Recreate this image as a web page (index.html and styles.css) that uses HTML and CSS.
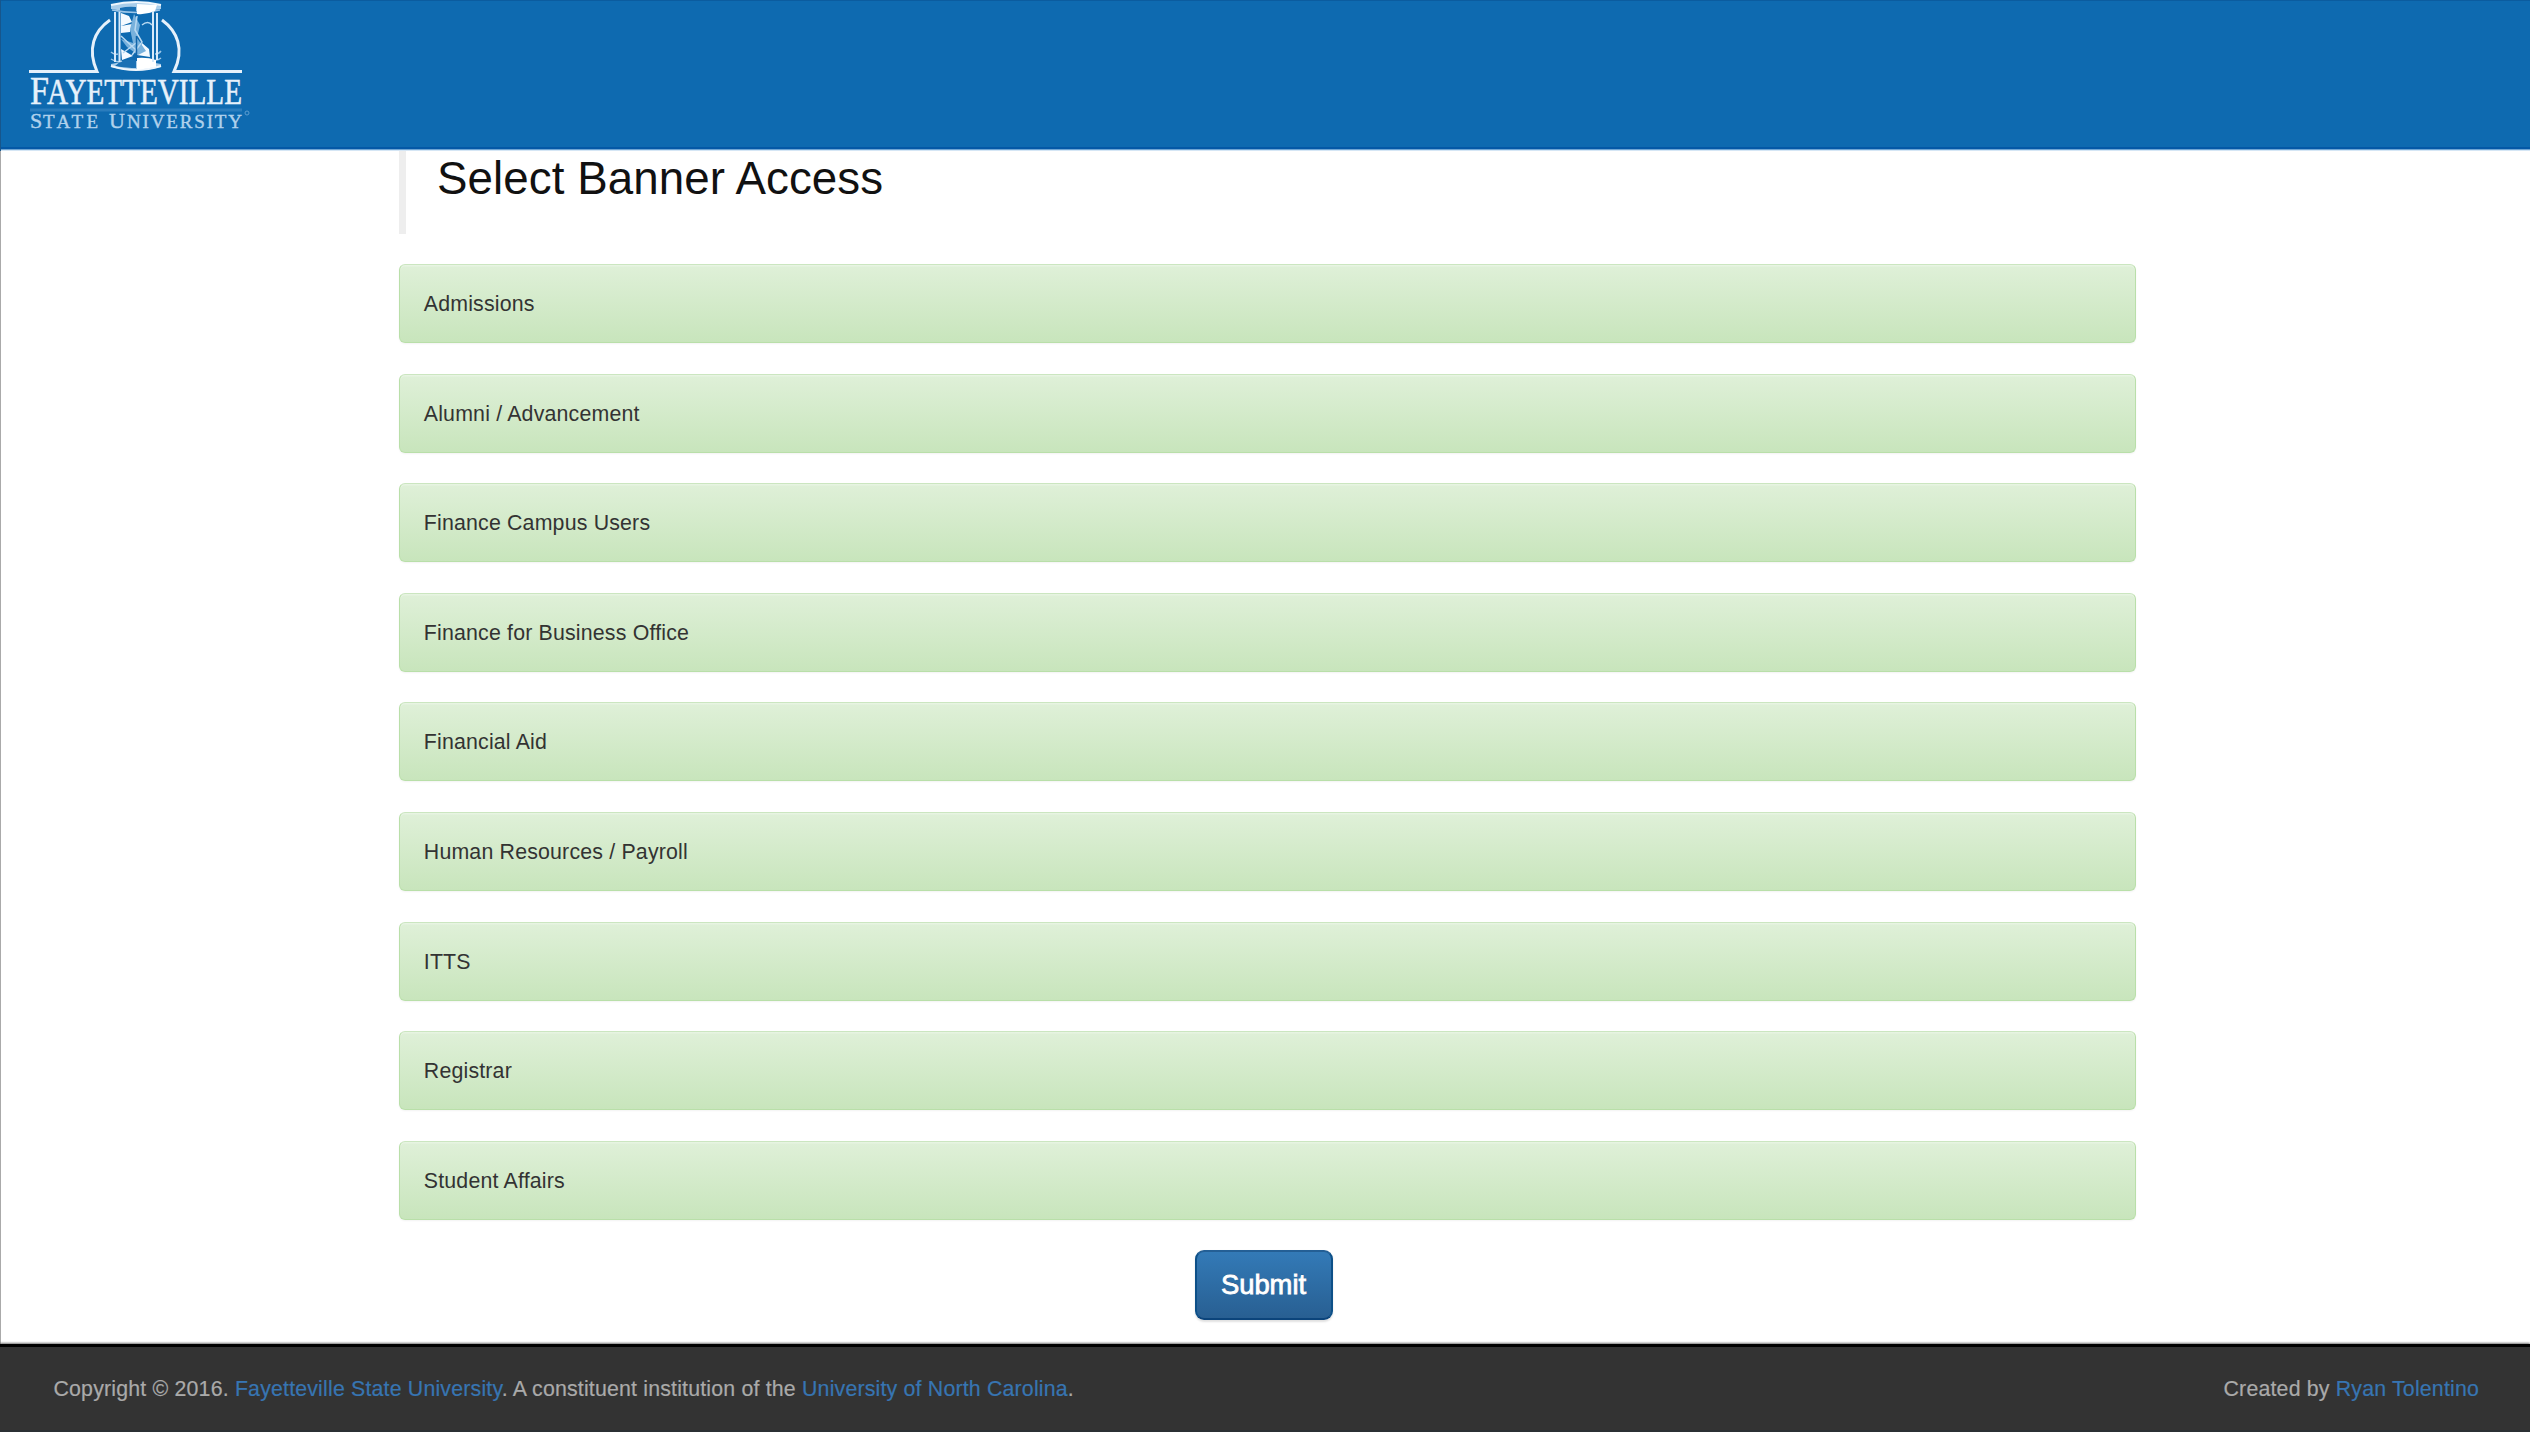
FILE: index.html
```html
<!DOCTYPE html>
<html lang="en">
<head>
<meta charset="utf-8">
<title>Select Banner Access</title>
<link rel="stylesheet" href="styles.css">
</head>
<body>
<header class="site-header">
  <svg class="logo" viewBox="0 0 280 148" role="img" aria-label="Fayetteville State University">
    <g fill="none" stroke="#e6f1fb" stroke-width="3">
      <path d="M29 71.5H97C87 49 94 31 110 20"/>
      <path d="M242 71.5H174C185 49 177 31 162 20"/>
    </g>
    <path d="M111 5Q136-1 161 5V9Q136 14 111 9ZM111 64Q136 58 161 64V67Q136 74 111 67Z" fill="#a9cdea"/>
    <path d="M120 8Q128 6 136 7V13Q128 13 120 11ZM121 61Q128 59 136 60V68Q128 68 115 66Z" fill="#1a70b4"/>
    <g fill="none" stroke="#eef6fd" stroke-width="2">
      <path d="M111 5Q136-1 161 5M111 66Q136 74 161 66"/>
      <path d="M112 10Q136 15 160 10M111 59Q117 63 122 61M150 61Q157 61 161 58M111 52Q114 55 118 54M155 54Q159 54 161 51" stroke="#9cc6e8" stroke-width="1.5"/>
    </g>
    <path d="M137 4L157 5L155 11Q146 15 137 14ZM137 58Q147 57 156 60V67L137 70Z" fill="#fff"/>
    <path d="M115 12V62M119.500 12V62M153 11V62M157 13V60" stroke="#d8eafa" stroke-width="2"/>
    <path d="M121 13L129 16L132 22L121 26ZM121 26L132 24L130 32L121 33ZM142 43L149 49L150 57L137 55ZM121 49L128 53L133 56L122 60Z" fill="#f4faff"/>
    <path d="M134 14L140 25L137 38L146 51L138 55L127 47L121 39L133 43L130 29Z" fill="#78b1dc"/>
    <path d="M137 16L135 30L142 42L132 55M121 36L136 50M142 25Q148 20 152 25M123 53L136 43" fill="none" stroke="#b9d9f1" stroke-width="1.500"/>
    <path d="M136.500 36V58" stroke="#1164a9" stroke-width="1.500"/>
    <g class="logo-text">
      <text class="name" x="30" y="104" font-size="39" textLength="19" lengthAdjust="spacingAndGlyphs">F</text>
      <text class="name" x="47" y="104" font-size="35" textLength="195" lengthAdjust="spacingAndGlyphs">AYETTEVILLE</text>
      <text class="sub" x="30" y="128" font-size="22">S</text>
      <text class="sub" x="43" y="128" font-size="19" textLength="55">TATE</text>
      <text class="sub" x="109" y="128" font-size="22">U</text>
      <text class="sub" x="127" y="128" font-size="19" textLength="115">NIVERSITY</text>
    </g>
    <path d="M30 110H242" stroke="#2b7dbd" stroke-width="3"/>
    <circle cx="247" cy="113" r="2" fill="none" stroke="#5d9dd0"/>
  </svg>
</header>
<main class="content">
  <div class="title-block"><h1>Select Banner Access</h1></div>
  <div class="panel">Admissions</div>
  <div class="panel">Alumni / Advancement</div>
  <div class="panel">Finance Campus Users</div>
  <div class="panel">Finance for Business Office</div>
  <div class="panel">Financial Aid</div>
  <div class="panel">Human Resources / Payroll</div>
  <div class="panel">ITTS</div>
  <div class="panel">Registrar</div>
  <div class="panel">Student Affairs</div>
  <button class="submit" type="button">Submit</button>
</main>
<footer class="site-footer">
  <p class="copyright">Copyright © 2016. <a>Fayetteville State University</a>. A constituent institution of the <a>University of North Carolina</a>.</p>
  <p class="credit">Created by <a>Ryan Tolentino</a></p>
</footer>
</body>
</html>
```
FILE: styles.css
```css
* { box-sizing: border-box; }
body {
  margin: 0;
  height: 1432px;
  overflow: hidden;
  display: flex;
  flex-direction: column;
  background: #fff;
  color: #333;
  font: 21.33px/30.5px "Liberation Sans", Arial, sans-serif;
}
.site-header {
  flex: none;
  height: 151px;
  background: linear-gradient(#0b5c9f 0 1px, #0e6ab0 1px 147px, #0458a6 147px 149px, #6fa5d3 149px 150px, #d5e6f5 150px);
  border-left: 1px solid #17568c;
}
.logo { display: block; width: 280px; height: 148px; margin-left: -1px; }
.logo-text { font-family: "Liberation Serif", "Times New Roman", serif; }
.name { fill: #e6f1fb; stroke: #e6f1fb; stroke-width: .5px; }
.sub { fill: #b0d1ec; stroke: #b0d1ec; stroke-width: .4px; }
.content {
  flex: 1;
  min-height: 0;
  padding: 0 394px 0 398px;
  border-left: 1px solid #aaa;
  display: flex;
  flex-direction: column;
}
.title-block {
  flex: none;
  height: 82.500px;
  margin-bottom: 30.500px;
  padding-left: 31px;
  border-left: 7.600px solid #eee;
}
h1 {
  margin: 0;
  padding-top: 2px;
  font-size: 45.700px;
  line-height: 52px;
  font-weight: 400;
  letter-spacing: .09px;
  color: #111;
}
.panel {
  flex: none;
  height: 79px;
  margin-bottom: 30.600px;
  padding: 24px 23.800px 0;
  border: 1.500px solid #b9dfa9;
  border-top-color: #cbe6c0;
  border-radius: 6px;
  background: linear-gradient(#dff0d8, #c8e5bc);
  box-shadow: inset 0 1.500px 0 rgba(255,255,255,.25), 0 1px 2px rgba(0,0,0,.05);
  letter-spacing: .18px;
}
.submit {
  flex: none;
  align-self: center;
  width: 138px;
  height: 70px;
  margin: 0 8px 0 0;
  padding: 0;
  border: 2px solid #245580;
  border-color: #245f95 #0d5088 #0b447b;
  border-radius: 9px;
  background: linear-gradient(#337ab7, #285f92);
  color: #fff;
  font: 27.400px "Liberation Sans", Arial, sans-serif;
  -webkit-text-stroke: .8px #fff;
  text-shadow: 0 -1.500px 0 rgba(0,0,0,.2);
  box-shadow: 0 1.500px 2px rgba(0,0,0,.12);
}
.site-footer {
  flex: none;
  height: 88px;
  padding: 27px 51px 0 53.500px;
  border-top: 3px solid #000;
  border-bottom: 2px solid #2b3034;
  background: #333;
  color: #aaa;
  letter-spacing: .18px;
  -webkit-text-stroke: .2px;
  box-shadow: 0 -1px 2px rgba(0,0,0,.55);
  display: flex;
  justify-content: space-between;
}
.site-footer p { margin: 0; }
.site-footer a { color: #3775b2; }
```
